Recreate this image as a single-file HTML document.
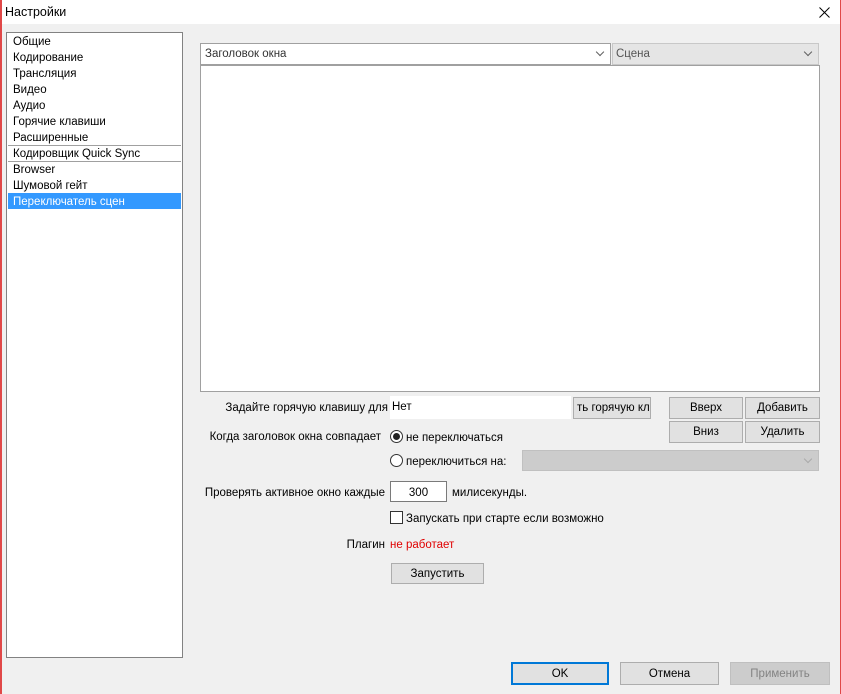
<!DOCTYPE html>
<html><head><meta charset="utf-8"><style>
*{box-sizing:border-box;margin:0;padding:0}
body{width:841px;height:694px;background:#f0f0f0;font-family:"Liberation Sans",sans-serif;font-size:11.5px;color:#000;position:relative;overflow:hidden}
.a{position:absolute}
.t{position:absolute;white-space:nowrap;line-height:14px}
.btn{position:absolute;background:#e1e1e1;border:1px solid #adadad;text-align:center;line-height:21px;white-space:nowrap;overflow:hidden}
.li{position:absolute;left:8px;width:173px;height:16px;line-height:18px;padding-left:5px}
.chev{position:absolute;width:6px;height:6px;border-right:1px solid #606060;border-bottom:1px solid #606060;transform:rotate(45deg)}
</style></head><body>
<div class="a" style="left:0;top:0;width:841px;height:24px;background:#fff"></div>
<div class="a" style="left:0;top:0;width:2px;height:694px;background:#e04848"></div>
<div class="a" style="left:840px;top:0;width:1px;height:694px;background:#e04848"></div>
<div class="t" style="left:5px;top:5px;font-size:12.5px">Настройки</div>
<svg class="a" style="left:819px;top:7px" width="11" height="11"><path d="M0.5 0.5L10.5 10.5M10.5 0.5L0.5 10.5" stroke="#000" stroke-width="1"/></svg>

<div class="a" style="left:6px;top:32px;width:177px;height:626px;background:#fff;border:1px solid #828282"></div>
<div class="li" style="top:33px">Общие</div>
<div class="li" style="top:49px">Кодирование</div>
<div class="li" style="top:65px">Трансляция</div>
<div class="li" style="top:81px">Видео</div>
<div class="li" style="top:97px">Аудио</div>
<div class="li" style="top:113px">Горячие клавиши</div>
<div class="li" style="top:129px">Расширенные</div>
<div class="a" style="left:8px;top:145px;width:173px;height:1px;background:#a0a0a0"></div>
<div class="li" style="top:145px">Кодировщик Quick Sync</div>
<div class="a" style="left:8px;top:161px;width:173px;height:1px;background:#a0a0a0"></div>
<div class="li" style="top:161px">Browser</div>
<div class="li" style="top:177px">Шумовой гейт</div>
<div class="li" style="top:193px;background:#3399ff;color:#fff">Переключатель сцен</div>

<div class="a" style="left:200px;top:43px;width:411px;height:22px;background:#fff;border:1px solid #a0a0a0"></div>
<div class="t" style="left:205px;top:47px;color:#333">Заголовок окна</div>
<div class="chev" style="left:597px;top:49px"></div>
<div class="a" style="left:612px;top:43px;width:207px;height:22px;background:#e5e5e5;border:1px solid #c8c8c8"></div>
<div class="t" style="left:616px;top:47px;color:#555">Сцена</div>
<div class="chev" style="left:805px;top:49px"></div>
<div class="a" style="left:200px;top:65px;width:620px;height:327px;background:#fff;border:1px solid #a0a0a0"></div>

<div class="t" style="right:453px;top:401px">Задайте горячую клавишу для</div>
<div class="a" style="left:390px;top:396px;width:181px;height:23px;background:#fff"></div>
<div class="t" style="left:392px;top:400px">Нет</div>
<div class="btn" style="left:573px;top:397px;width:78px;height:22px;text-align:left;padding-left:3px">ть горячую кл</div>
<div class="btn" style="left:669px;top:397px;width:74px;height:22px">Вверх</div>
<div class="btn" style="left:745px;top:397px;width:75px;height:22px">Добавить</div>
<div class="btn" style="left:669px;top:421px;width:74px;height:22px">Вниз</div>
<div class="btn" style="left:745px;top:421px;width:75px;height:22px">Удалить</div>

<div class="t" style="right:460px;top:430px">Когда заголовок окна совпадает</div>
<div class="a" style="left:390px;top:430px;width:13px;height:13px;border:1px solid #333;border-radius:50%;background:#fff"></div>
<div class="a" style="left:393px;top:433px;width:7px;height:7px;border-radius:50%;background:#222"></div>
<div class="t" style="left:406px;top:431px">не переключаться</div>
<div class="a" style="left:390px;top:454px;width:13px;height:13px;border:1px solid #333;border-radius:50%;background:#fff"></div>
<div class="t" style="left:406px;top:455px">переключиться на:</div>
<div class="a" style="left:522px;top:450px;width:297px;height:21px;background:#cccccc;border:1px solid #c0c0c0"></div>
<div class="chev" style="left:805px;top:456px;border-color:#aaa"></div>

<div class="t" style="right:456px;top:486px">Проверять активное окно каждые</div>
<div class="a" style="left:390px;top:481px;width:57px;height:21px;background:#fff;border:1px solid #7a7a7a"></div>
<div class="t" style="left:390px;top:486px;width:57px;text-align:center">300</div>
<div class="t" style="left:452px;top:486px">милисекунды.</div>

<div class="a" style="left:390px;top:511px;width:13px;height:13px;border:1px solid #333;background:#fff"></div>
<div class="t" style="left:406px;top:512px">Запускать при старте если возможно</div>

<div class="t" style="right:456px;top:538px">Плагин</div>
<div class="t" style="left:390px;top:538px;color:#e00000">не работает</div>
<div class="btn" style="left:391px;top:563px;width:93px;height:21px;line-height:21px">Запустить</div>

<div class="btn" style="left:511px;top:662px;width:98px;height:23px;border:2px solid #0078d7;line-height:20px">OK</div>
<div class="btn" style="left:620px;top:662px;width:99px;height:23px;line-height:22px">Отмена</div>
<div class="btn" style="left:730px;top:662px;width:100px;height:23px;line-height:22px;background:#cccccc;border-color:#bfbfbf;color:#838383">Применить</div>
</body></html>
